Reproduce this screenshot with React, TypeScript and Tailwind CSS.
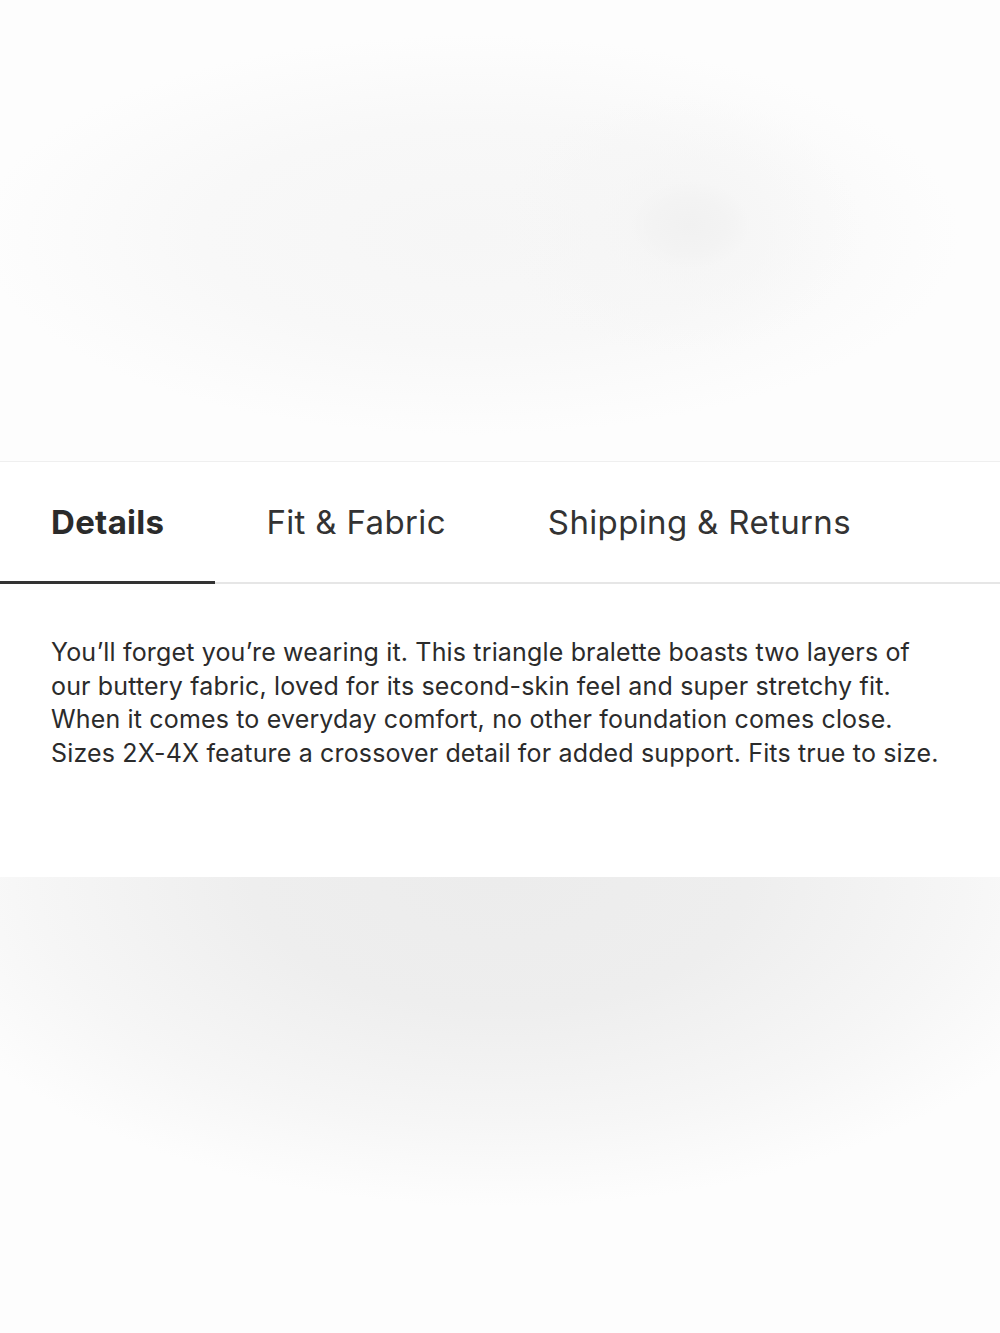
import { useState } from 'react'

const tabs = ['Details', 'Fit & Fabric', 'Shipping & Returns']

const lines = [
  'You’ll forget you’re wearing it. This triangle bralette boasts two layers of',
  'our buttery fabric, loved for its second-skin feel and super stretchy fit.',
  'When it comes to everyday comfort, no other foundation comes close.',
  'Sizes 2X-4X feature a crossover detail for added support. Fits true to size.',
]

export default function App() {
  const [active, setActive] = useState(0)

  return (
    <div className="flex min-h-[1333px] w-full flex-col bg-white font-['Inter','Liberation_Sans',sans-serif] text-[#2b2b2b]">
      {/* blurred product photo behind the sheet */}
      <div className="h-[461px] bg-[#fdfdfd] bg-[radial-gradient(ellipse_60px_44px_at_690px_225px,#f1f1f1_0%,#f3f3f3_60%,transparent_100%),radial-gradient(ellipse_180px_130px_at_680px_225px,#f5f5f5_0%,transparent_100%),radial-gradient(ellipse_490px_200px_at_470px_235px,#f6f6f6_0%,#f8f8f8_55%,transparent_100%)]" />

      <section className="border-t border-[#efefef] bg-white">
        <div className="flex border-b-2 border-[#e6e6e6]">
          {tabs.map((t, i) => (
            <button
              key={t}
              onClick={() => setActive(i)}
              className={
                i === active
                  ? '-mb-[2px] flex h-[122px] items-center border-b-[3px] border-[#333333] px-[51px] pt-[3px] text-[33px] font-bold tracking-[0.3px] text-[#2b2b2b]'
                  : '-mb-[2px] flex h-[122px] items-center border-b-[3px] border-transparent px-[51px] pt-[3px] text-[33px] font-normal tracking-[0.35px] text-[#333333]'
              }
            >
              {t}
            </button>
          ))}
        </div>
        <div className="px-[51px] pb-[106px] pt-[52px]">
          <p className="text-[25px] leading-[33.7px] tracking-[0.16px] text-[#2b2b2b]">
            {lines.map((l) => (
              <span key={l} className="block whitespace-nowrap">
                {l}
              </span>
            ))}
          </p>
        </div>
      </section>

      <div className="flex-1 bg-[#fdfdfd] bg-[radial-gradient(ellipse_620px_330px_at_500px_0px,#ececec_0%,#eeeeee_40%,#f6f6f6_75%,transparent_100%)]" />
    </div>
  )
}
